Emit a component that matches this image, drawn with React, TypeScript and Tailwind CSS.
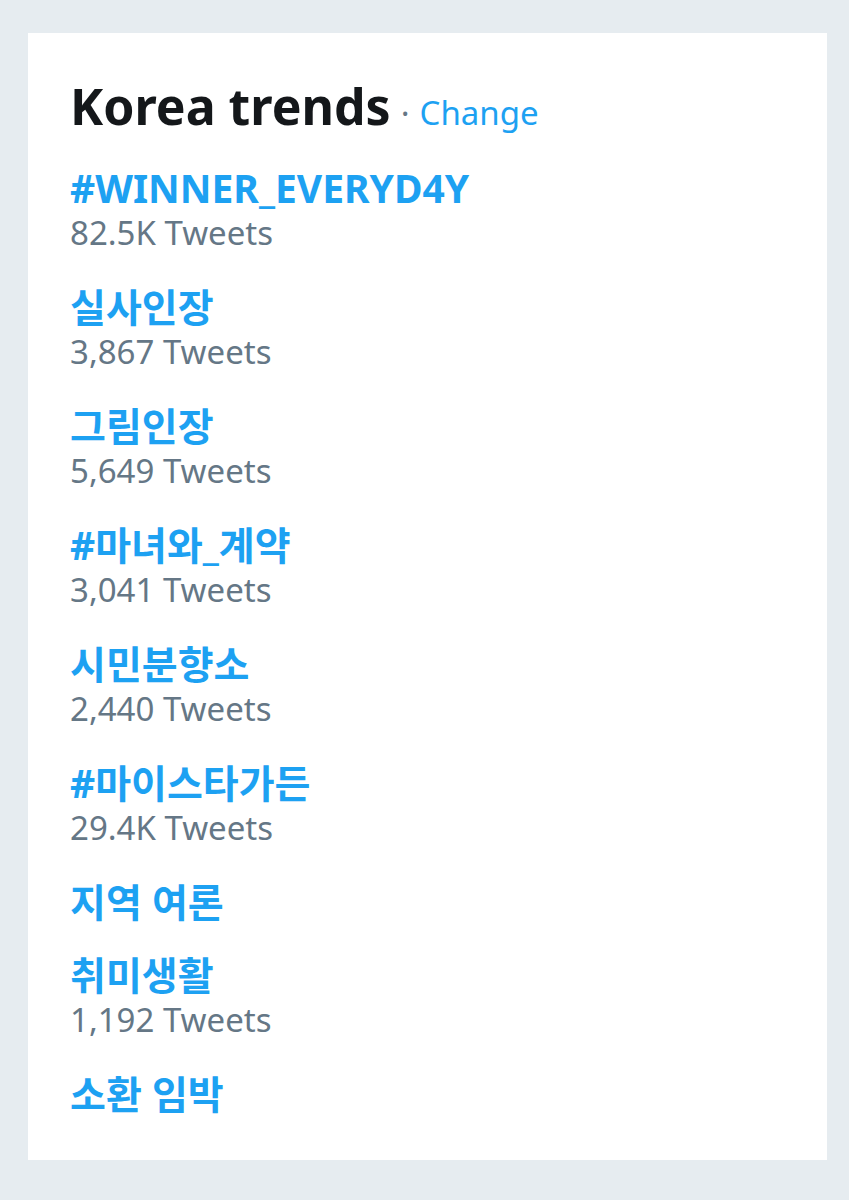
import React from "react";

const trends: { name: string; count?: string }[] = [
  { name: "#WINNER_EVERYD4Y", count: "82.5K Tweets" },
  { name: "실사인장", count: "3,867 Tweets" },
  { name: "그림인장", count: "5,649 Tweets" },
  { name: "#마녀와_계약", count: "3,041 Tweets" },
  { name: "시민분향소", count: "2,440 Tweets" },
  { name: "#마이스타가든", count: "29.4K Tweets" },
  { name: "지역 여론" },
  { name: "취미생활", count: "1,192 Tweets" },
  { name: "소환 임박" },
];

export default function App() {
  return (
    <div
      className="w-[849px] h-[1200px] bg-[#e6ecf0] pt-[33px] pl-[28px]"
      style={{ fontFamily: '"Noto Sans", "Noto Sans CJK KR", sans-serif' }}
    >
      <div className="w-[799px] h-[1127px] bg-white pt-[43px] pl-[42px]">
        <div className="flex items-baseline h-[60px] leading-[60px]">
          <span className="text-[50px] font-bold text-[#14171a]">Korea trends</span>
          <span className="text-[33px] text-[#657786] mx-[10px]">·</span>
          <span className="text-[33px] text-[#1da1f2]">Change</span>
        </div>
        <div className="flex flex-col gap-[27px] mt-[29px]">
          {trends.map((t) => (
            <div key={t.name} className="flex flex-col">
              <div className="text-[39px] font-bold text-[#1da1f2] leading-[46px] h-[46px]">
                {t.name}
              </div>
              {t.count && (
                <div className="text-[33px] text-[#657786] leading-[44px] h-[46px]">
                  {t.count}
                </div>
              )}
            </div>
          ))}
        </div>
      </div>
    </div>
  );
}
